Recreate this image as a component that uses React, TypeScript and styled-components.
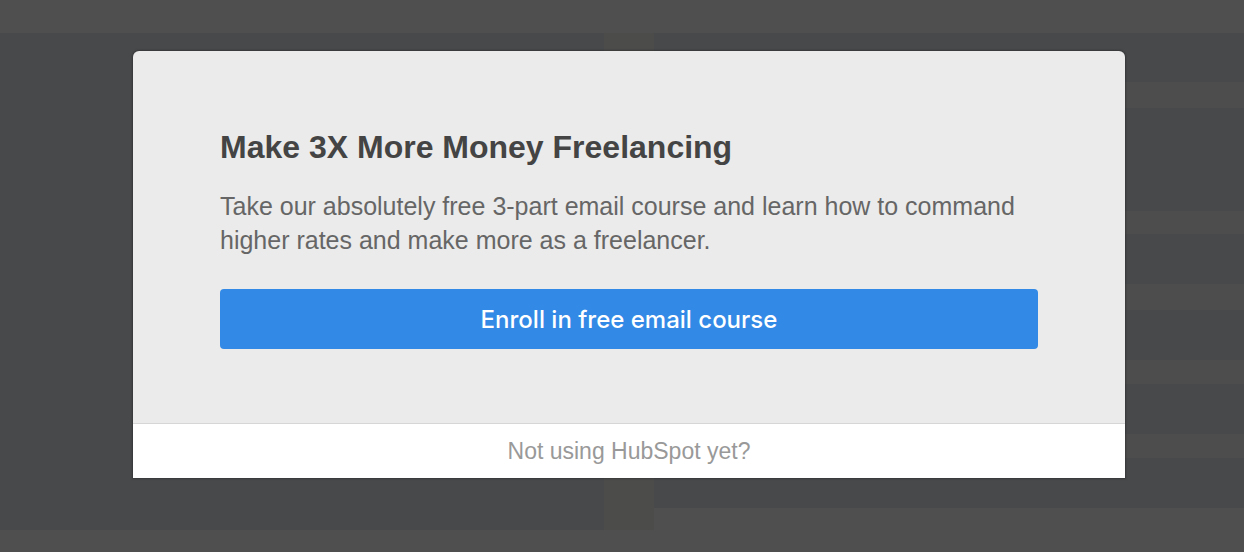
import React from "react";
import styled, { createGlobalStyle } from "styled-components";

const GlobalStyle = createGlobalStyle`
  html, body {
    margin: 0;
    padding: 0;
    background: #4f4f4f;
  }
  #root {
    width: 1244px;
    height: 552px;
    overflow: hidden;
  }
`;

// Backdrop — the dimmed page sitting behind the modal
const Page = styled.div`
  position: relative;
  width: 1244px;
  height: 552px;
  background: #4f4f4f;
  padding-top: 33px;
  box-sizing: border-box;
  display: flex;
  align-items: flex-start;
`;

const LeftPanel = styled.div`
  width: 604px;
  height: 497px;
  background: #48494b;
`;

const Gutter = styled.div`
  width: 50px;
  height: 497px;
  background: #4c4c4b;
`;

const RightPanel = styled.div`
  flex: 1;
  height: 475px;
  background: #48494b;
  display: flex;
  flex-direction: column;
`;

const Stripe = styled.div<{ top: number; size: number }>`
  margin-top: ${(p) => p.top}px;
  height: ${(p) => p.size}px;
  background: #4d4d4d;
`;

// Modal
const Modal = styled.div`
  position: absolute;
  left: 133px;
  top: 51px;
  width: 992px;
  height: 427px;
  border-radius: 6px 6px 0 0;
  overflow: hidden;
  background: #ebebeb;
  box-shadow: 0 0 2px 1px rgba(0, 0, 0, 0.25);
  display: flex;
  flex-direction: column;
  font-family: "Liberation Sans", Arial, sans-serif;
`;

const Body = styled.div`
  flex: 1;
  padding: 78px 87px 0;
  display: flex;
  flex-direction: column;
`;

const Title = styled.h2`
  margin: 0;
  font-size: 32px;
  line-height: 36px;
  font-weight: 700;
  color: #444444;
`;

const Text = styled.p`
  margin: 24px 0 0;
  font-size: 25px;
  line-height: 34px;
  color: #666666;
`;

const EnrollButton = styled.button`
  margin-top: 32px;
  height: 60px;
  width: 100%;
  border: none;
  border-radius: 4px;
  background: #3289e6;
  color: #ffffff;
  font-family: Inter, "Noto Sans", sans-serif;
  font-size: 24px;
  font-weight: 500;
  cursor: pointer;
`;

const Footer = styled.div`
  height: 54px;
  border-top: 1px solid #d6d6d6;
  background: #ffffff;
  display: flex;
  align-items: center;
  justify-content: center;
  font-size: 23px;
  color: #999999;
`;

const stripes = [
  { top: 49, size: 26 },
  { top: 103, size: 23 },
  { top: 50, size: 26 },
  { top: 50, size: 24 },
  { top: 50, size: 24 },
];

export default function App() {
  return (
    <>
      <GlobalStyle />
      <Page>
        <LeftPanel />
        <Gutter />
        <RightPanel>
          {stripes.map((s, i) => (
            <Stripe key={i} top={s.top} size={s.size} />
          ))}
        </RightPanel>
        <Modal>
          <Body>
            <Title>Make 3X More Money Freelancing</Title>
            <Text>
              Take our absolutely free 3-part email course and learn how to command
              higher rates and make more as a freelancer.
            </Text>
            <EnrollButton>Enroll in free email course</EnrollButton>
          </Body>
          <Footer>Not using HubSpot yet?</Footer>
        </Modal>
      </Page>
    </>
  );
}
